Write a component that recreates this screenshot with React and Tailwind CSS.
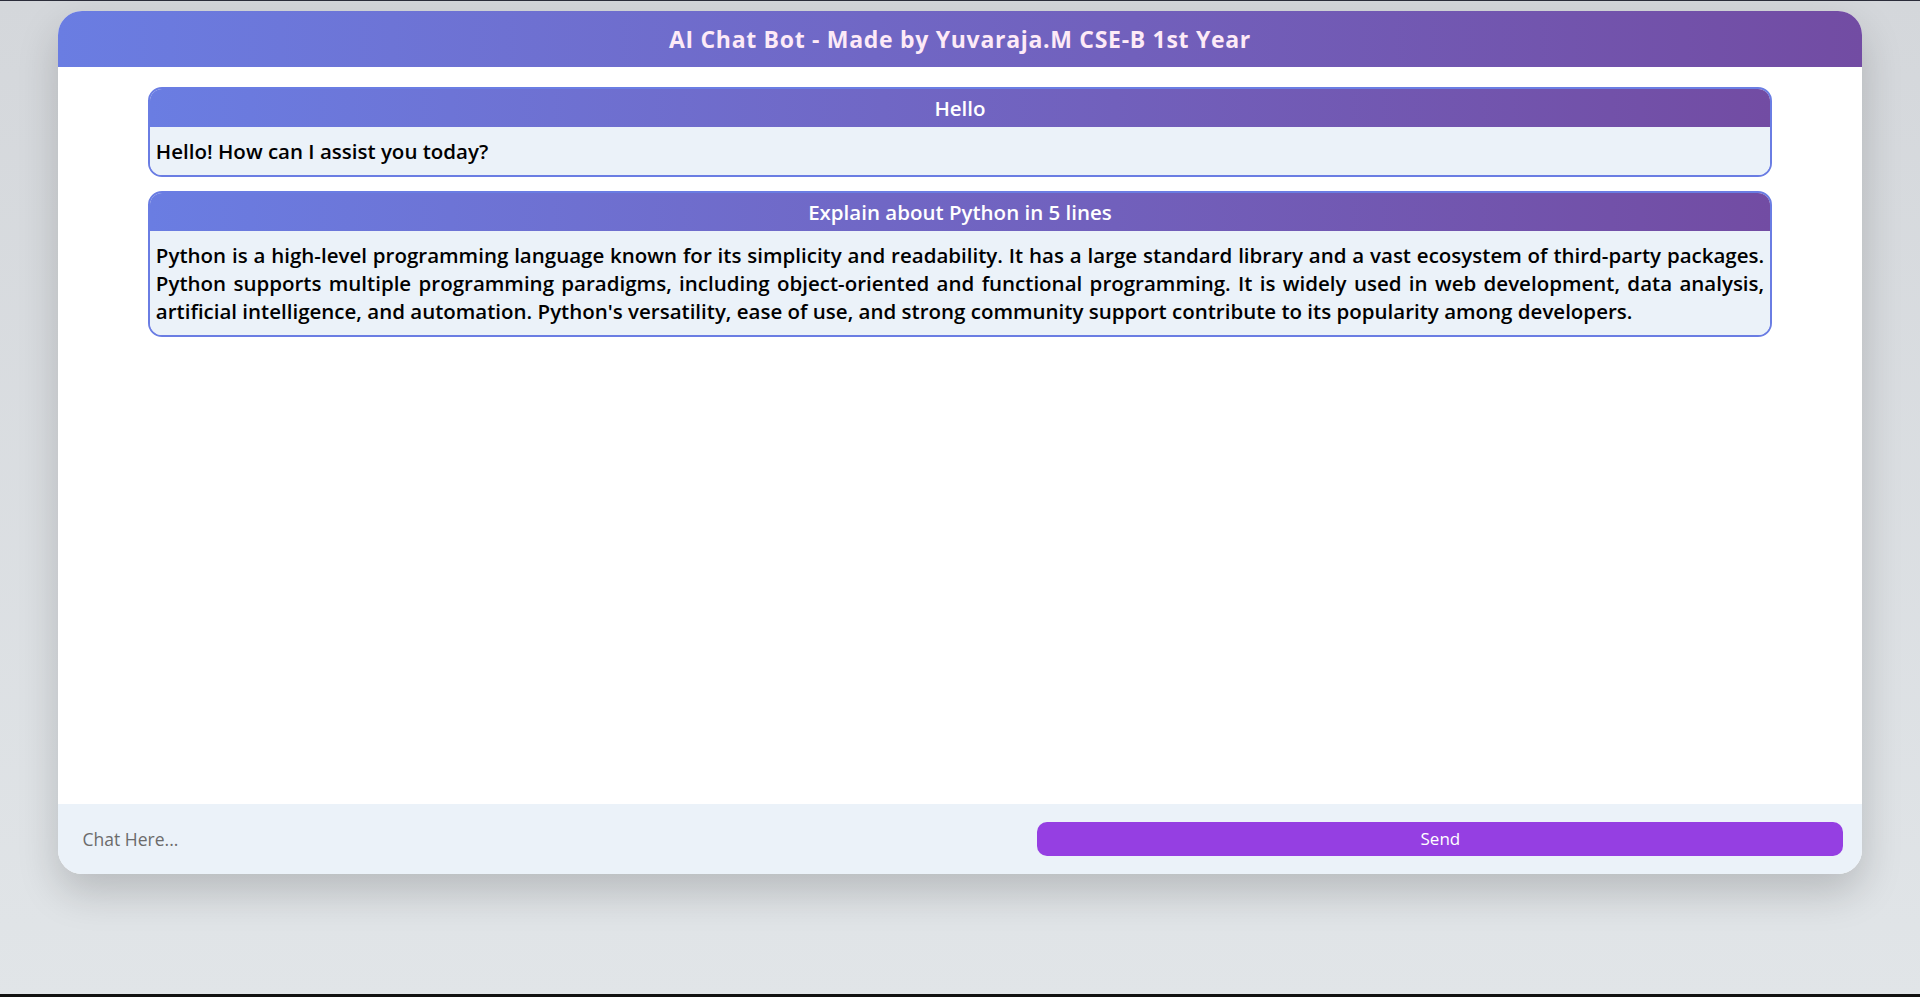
import { useState } from 'react';

const messages = [
  { question: 'Hello', answer: 'Hello! How can I assist you today?' },
  {
    question: 'Explain about Python in 5 lines',
    answer:
      "Python is a high-level programming language known for its simplicity and readability. It has a large standard library and a vast ecosystem of third-party packages. Python supports multiple programming paradigms, including object-oriented and functional programming. It is widely used in web development, data analysis, artificial intelligence, and automation. Python's versatility, ease of use, and strong community support contribute to its popularity among developers.",
  },
];

function MessageCard({ question, answer }) {
  return (
    <div className="w-[90%] overflow-hidden rounded-[14px] border-2 border-[#6a7de3]">
      <div className="flex h-[38px] items-center justify-center bg-gradient-to-r from-[#6a7de2] to-[#724ca3] text-[20.5px] font-semibold text-white [font-family:'Open_Sans',sans-serif]">
        {question}
      </div>
      <div className="bg-[#ebf2f9] px-[6px] py-[10px] text-justify text-[20.5px] leading-[28px] font-semibold text-black [font-family:'Open_Sans',sans-serif]">
        {answer}
      </div>
    </div>
  );
}

export default function App() {
  const [text, setText] = useState('');

  return (
    <div className="flex h-[997px] flex-col border-t border-[#2b2d3a] bg-gradient-to-b from-[#d4d7db] to-[#e1e5e8]">
      <div className="flex-1 pt-[10px]">
        <div className="mx-auto flex h-[863px] w-[94%] flex-col overflow-hidden rounded-[24px] bg-white shadow-[0_18px_40px_rgba(0,0,0,0.18)]">
          <header className="flex h-[56px] shrink-0 items-center justify-center bg-gradient-to-r from-[#6a7de2] to-[#724ca3]">
            <h1 className="text-[23px] font-bold tracking-[0.7px] text-[#fdeaf7] [font-family:'Open_Sans',sans-serif]">
              AI Chat Bot - Made by Yuvaraja.M CSE-B 1st Year
            </h1>
          </header>

          <main className="flex flex-1 flex-col items-center gap-[14px] pt-[20px]">
            {messages.map((m, i) => (
              <MessageCard key={i} question={m.question} answer={m.answer} />
            ))}
          </main>

          <form
            onSubmit={(e) => {
              e.preventDefault();
              setText('');
            }}
            className="flex h-[70px] shrink-0 items-center bg-[#ebf2f9] pr-[19px]"
          >
            <input
              value={text}
              onChange={(e) => setText(e.target.value)}
              placeholder="Chat Here..."
              className="h-full flex-1 bg-transparent pl-[25px] text-[17.5px] text-[#333] outline-none placeholder:text-[#6b6b6b] [font-family:'Open_Sans',sans-serif]"
            />
            <button
              type="submit"
              className="h-[34px] w-[806px] rounded-[10px] bg-[#953fe2] text-[17px] font-medium text-white [font-family:'Open_Sans',sans-serif]"
            >
              Send
            </button>
          </form>
        </div>
      </div>
      <div className="h-[3px] bg-[#111]" />
    </div>
  );
}
